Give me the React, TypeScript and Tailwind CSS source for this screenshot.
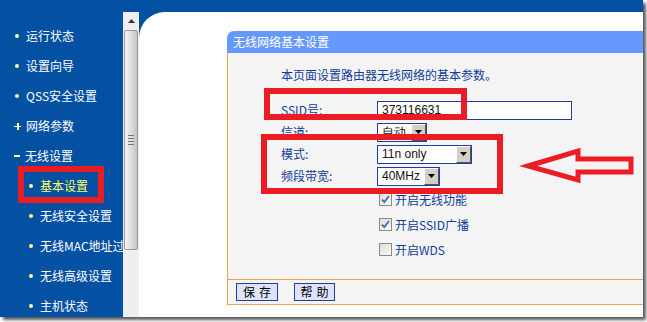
import React from "react";

const cjk = { fontFamily: '"Noto Sans CJK SC", "Liberation Sans", sans-serif' };
const latin = { fontFamily: '"Liberation Sans", Arial, sans-serif' };

const menu = [
  { label: "运行状态", mark: "dot", sub: false },
  { label: "设置向导", mark: "dot", sub: false },
  { label: "QSS安全设置", mark: "dot", sub: false },
  { label: "网络参数", mark: "plus", sub: false },
  { label: "无线设置", mark: "minus", sub: false },
  { label: "基本设置", mark: "dot", sub: true, active: true },
  { label: "无线安全设置", mark: "dot", sub: true },
  { label: "无线MAC地址过滤", mark: "dot", sub: true },
  { label: "无线高级设置", mark: "dot", sub: true },
  { label: "主机状态", mark: "dot", sub: true },
];

function Mark({ kind }: { kind: string }) {
  if (kind === "plus")
    return (
      <span className="relative w-[7px] h-[7px] shrink-0">
        <span className="absolute left-0 top-[3px] w-[7px] h-[1.5px] bg-[#ffff99]" />
        <span className="absolute left-[3px] top-0 w-[1.5px] h-[7px] bg-[#ffff99]" />
      </span>
    );
  if (kind === "minus") return <span className="w-[6px] h-[2px] bg-[#ffff99] shrink-0" />;
  return <span className="w-[4px] h-[4px] rounded-full bg-[#ffff99] shrink-0 ml-[1px] mr-[2px]" />;
}

function Select({ value, width }: { value: string; width: number }) {
  return (
    <div
      className="h-[19px] flex border border-[#1e3f9e] bg-white"
      style={{ width }}
    >
      <span className="flex-1 pl-[4px] text-[12px] leading-[17px] text-[#111]" style={latin}>
        {value}
      </span>
      <span className="w-[15px] h-[17px] bg-[#d4d0c8] border border-t-white border-l-white border-r-[#555] border-b-[#555] flex items-center justify-center">
        <svg width="7" height="4" viewBox="0 0 7 4">
          <path d="M0 0h7L3.5 4z" fill="#000" />
        </svg>
      </span>
    </div>
  );
}

function Check({ on, label }: { on: boolean; label: string }) {
  return (
    <div className="h-[25px] flex items-center gap-[3px]">
      <span className="w-[13px] h-[13px] border border-[#8a8a8a] bg-gradient-to-br from-[#dcdcdc] to-[#fafafa] flex items-center justify-center">
        {on && (
          <svg width="9" height="9" viewBox="0 0 9 9">
            <path d="M1 4.5l2.3 2.6L8 1" stroke="#4a66ad" strokeWidth="1.8" fill="none" />
          </svg>
        )}
      </span>
      <span className="text-[12px] text-[#103c9c]">{label}</span>
    </div>
  );
}

export default function App() {
  return (
    <div className="w-[647px] h-[322px] bg-white overflow-hidden" style={cjk}>
      <div className="relative w-[643px] h-[317px] bg-[#0450a2] flex overflow-hidden shadow-[3px_3px_3px_rgba(0,0,0,0.65)]">
        {/* left menu */}
        <div className="w-[123px] shrink-0 overflow-hidden pt-[21px]">
          {menu.map((m) => (
            <div
              key={m.label}
              className={`h-[30px] flex items-center gap-[5px] whitespace-nowrap ${m.sub ? "pl-[28px]" : "pl-[14px]"}`}
            >
              <Mark kind={m.mark} />
              <span className={`text-[12px] ${m.active ? "text-[#ffff66]" : "text-white"}`}>{m.label}</span>
            </div>
          ))}
        </div>

        <div className="flex-1 flex pt-[12px] min-w-0">
          {/* scrollbar */}
          <div className="w-[16px] shrink-0 bg-[#efefef] flex flex-col items-center">
            <div className="h-[17px] flex items-center justify-center">
              <svg width="7" height="4" viewBox="0 0 7 4">
                <path d="M0 4h7L3.5 0z" fill="#333" />
              </svg>
            </div>
            <div className="w-[14px] h-[220px] mt-[1px] rounded-[2px] border border-[#9a9a9a] bg-gradient-to-r from-[#f4f4f4] via-[#dedede] to-[#c4c4c4] flex items-center justify-center">
              <div className="flex flex-col gap-[2px]">
                <span className="w-[6px] h-[1px] bg-[#777]" />
                <span className="w-[6px] h-[1px] bg-[#777]" />
                <span className="w-[6px] h-[1px] bg-[#777]" />
                <span className="w-[6px] h-[1px] bg-[#777]" />
              </div>
            </div>
          </div>

          {/* main area */}
          <div className="flex-1 bg-white rounded-tl-[26px] overflow-hidden pl-[88px] pt-[19px]">
            <div className="w-[430px]">
              <div className="h-[22px] bg-[#6699ff] rounded-tl-[7px] pl-[6px] flex items-center text-[12px] text-white">
                无线网络基本设置
              </div>
              <div className="border-l border-[#f4a24c] bg-[#f4f4f4]">
                <div className="h-[226px] pl-[53px] pt-[11px]">
                  <div className="h-[22px] flex items-center text-[12px] text-[#103c9c]">
                    本页面设置路由器无线网络的基本参数。
                  </div>
                  <div className="mt-[13px] grid grid-cols-[96px_auto] text-[12px] text-[#103c9c]">
                    <div className="h-[22px] flex items-center">SSID号:</div>
                    <div className="h-[22px] flex items-center">
                      <div className="w-[195px] h-[19px] border border-[#1e3f9e] bg-white pl-[4px] text-[12px] leading-[17px] text-[#111]" style={latin}>
                        373116631
                      </div>
                    </div>
                    <div className="h-[22px] flex items-center">信道:</div>
                    <div className="h-[22px] flex items-center">
                      <Select value="自动" width={50} />
                    </div>
                    <div className="h-[22px] flex items-center">模式:</div>
                    <div className="h-[22px] flex items-center">
                      <Select value="11n only" width={95} />
                    </div>
                    <div className="h-[22px] flex items-center">频段带宽:</div>
                    <div className="h-[22px] flex items-center">
                      <Select value="40MHz" width={63} />
                    </div>
                    <div />
                    <div className="pl-[2px]">
                      <Check on label="开启无线功能" />
                      <Check on label="开启SSID广播" />
                      <Check on={false} label="开启WDS" />
                    </div>
                  </div>
                </div>
                <div className="border-t border-b border-[#f4a24c] h-[26px] pl-[8px] pt-[3px] flex gap-[16px]">
                  <button className="w-[42px] h-[18px] bg-[#dfe2fb] border border-[#1e3f9e] text-[12px] leading-[16px] text-black tracking-[4px] pl-[4px]">
                    保存
                  </button>
                  <button className="w-[41px] h-[18px] bg-[#dfe2fb] border border-[#1e3f9e] text-[12px] leading-[16px] text-black tracking-[4px] pl-[4px]">
                    帮助
                  </button>
                </div>
              </div>
            </div>
          </div>
        </div>

        {/* red annotations */}
        <div className="absolute left-[18px] top-[166px] w-[86px] h-[37px] border-[6px] border-[#ec1c24]" />
        <div className="absolute left-[264px] top-[88px] w-[203px] h-[32px] border-[6px] border-[#ec1c24]" />
        <div className="absolute left-[261px] top-[134px] w-[242px] h-[60px] border-[6px] border-[#ec1c24]" />
        <svg className="absolute left-0 top-0" width="643" height="317" viewBox="0 0 643 317">
          <polygon
            points="528,166 578,151 578,159 631,159 631,172 578,172 578,180"
            fill="none"
            stroke="#ec1c24"
            strokeWidth="5"
            strokeLinejoin="miter"
          />
        </svg>
      </div>
    </div>
  );
}
